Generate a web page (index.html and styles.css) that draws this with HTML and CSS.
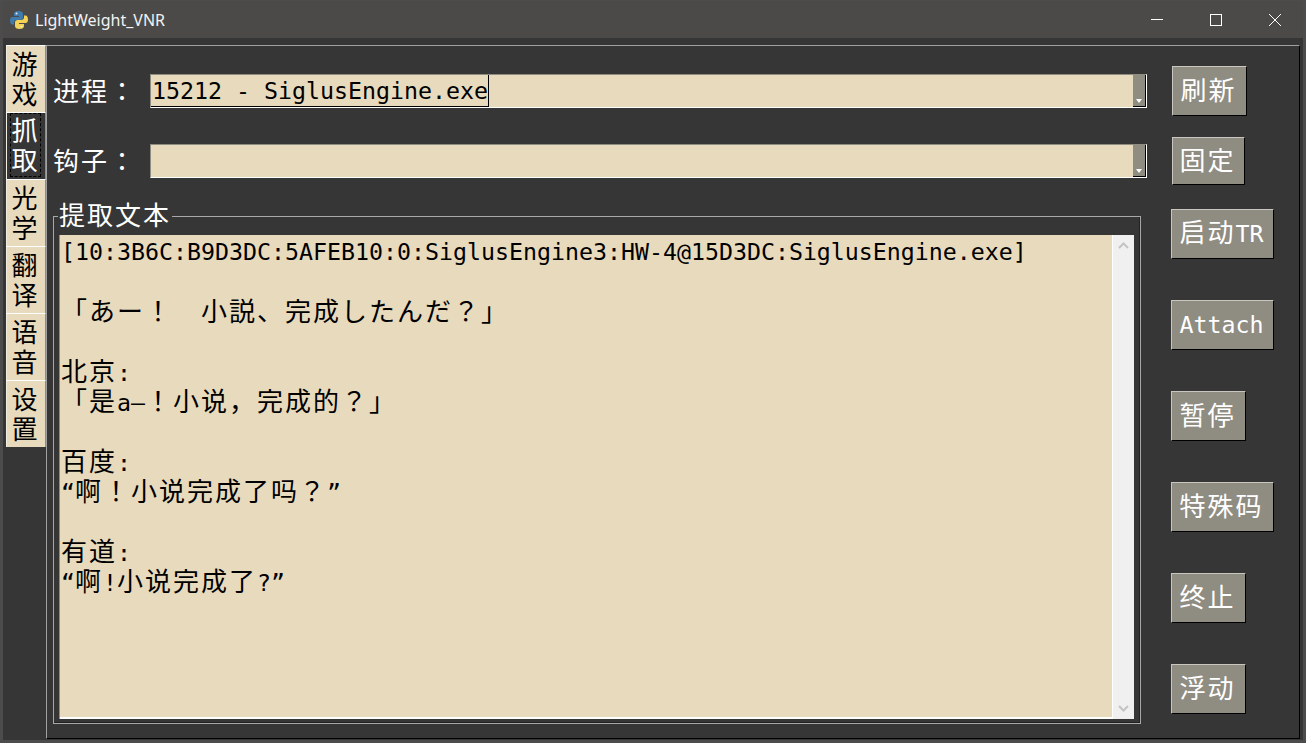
FILE: index.html
```html
<!DOCTYPE html>
<html lang="en">
  <head>
    <meta charset="UTF-8" />
    <title>LightWeight_VNR</title>
    <link rel="stylesheet" href="styles.css">
  </head>
  <body>
    <div class="window">
      <div class="titlebar">
        <svg class="app-icon" width="20" height="20" viewBox="0 0 20 20">
          <path fill="#3f7cad" d="M9.5 1C6.5 1 5 2.2 5 4v2h5v1H3.500C1.800 7 1 8.500 1 10.500S1.800 14.500 3.500 14.500H5V12.500C5 11 6.200 10 7.500 10h4C13 10 14 9 14 7.500V4C14 2.200 12.300 1 9.500 1z" />
          <path fill="#f2d355" d="M10.500 19C13.500 19 15 17.800 15 16v-2h-5v-1h6.500c1.700 0 2.500-1.500 2.500-3.500S18.200 5.500 16.500 5.500H15v2C15 9 13.800 10 12.500 10h-4C7 10 6 11 6 12.500V16c0 1.800 1.700 3 4.500 3z" />
          <circle cx="7.500" cy="3.500" r="1" fill="#e8eef2" />
          <circle cx="12.500" cy="16.500" r="1" fill="#e8eef2" />
        </svg>
        <span class="app-title">LightWeight_VNR</span>
        <div class="win-controls">
          <svg class="win-btn" width="46" height="38" viewBox="0 0 46 38"><path d="M17 18.500h12" stroke="#fff" fill="none" /></svg>
          <svg class="win-btn" width="46" height="38" viewBox="0 0 46 38"><rect x="17.500" y="13.500" width="11" height="11" stroke="#fff" fill="none" /></svg>
          <svg class="win-btn" width="46" height="38" viewBox="0 0 46 38"><path d="M17 13l12 12M29 13L17 25" stroke="#fff" fill="none" /></svg>
        </div>
      </div>
      <div class="content">
        <div class="tabs">
          <div class="tab">游<br />戏</div>
          <div class="tab tab-active"><span class="tab-focus">抓<br />取</span></div>
          <div class="tab">光<br />学</div>
          <div class="tab">翻<br />译</div>
          <div class="tab">语<br />音</div>
          <div class="tab">设<br />置</div>
        </div>
        <div class="pane">
          <div class="main">
            <div class="row row-process">
              <label class="row-label">进程：</label>
              <div class="combo">
                <span class="combo-value mono">15212 - SiglusEngine.exe</span>
                <span class="combo-arrow"><i></i></span>
              </div>
            </div>
            <div class="row row-hook">
              <label class="row-label">钩子：</label>
              <div class="combo">
                <span class="combo-arrow"><i></i></span>
              </div>
            </div>
            <div class="group">
              <div class="group-title">提取文本</div>
              <div class="textbox">
                <div class="text">
                  <p class="mono">[10:3B6C:B9D3DC:5AFEB10:0:SiglusEngine3:HW-4@15D3DC:SiglusEngine.exe]</p>
                  <p>&nbsp;</p>
                  <p>「あー！　小説、完成したんだ？」</p>
                  <p>&nbsp;</p>
                  <p>北京<span class="mono">:</span></p>
                  <p>「是<span class="mono">a—</span>！小说，完成的？」</p>
                  <p>&nbsp;</p>
                  <p>百度<span class="mono">:</span></p>
                  <p><span class="mono">“</span>啊！小说完成了吗？<span class="mono">”</span></p>
                  <p>&nbsp;</p>
                  <p>有道<span class="mono">:</span></p>
                  <p><span class="mono">“</span>啊<span class="mono">!</span>小说完成了<span class="mono">?”</span></p>
                </div>
                <div class="scrollbar">
                  <svg width="21" height="20" viewBox="0 0 21 20"><path d="M6 13l4.500-4.500L15 13" stroke="#c4c4c4" stroke-width="2" fill="none" /></svg>
                  <svg width="21" height="20" viewBox="0 0 21 20"><path d="M6 7l4.500 4.500L15 7" stroke="#c4c4c4" stroke-width="2" fill="none" /></svg>
                </div>
              </div>
            </div>
          </div>
          <div class="buttons">
            <button class="btn btn-refresh">刷新</button>
            <button class="btn btn-fix">固定</button>
            <button class="btn btn-wide">启动<span class="mono">TR</span></button>
            <button class="btn btn-wide"><span class="mono">Attach</span></button>
            <button class="btn">暂停</button>
            <button class="btn btn-wide">特殊码</button>
            <button class="btn">终止</button>
            <button class="btn">浮动</button>
          </div>
        </div>
      </div>
    </div>
  </body>
</html>
```
FILE: styles.css
```css
* {
  box-sizing: border-box;
}
body {
  margin: 0;
  font-family: "Noto Sans CJK JP", sans-serif;
}
.mono {
  font-family: "DejaVu Sans Mono", monospace;
  font-size: 23.25px;
  letter-spacing: 0;
}
.window {
  width: 1306px;
  height: 743px;
  display: flex;
  flex-direction: column;
  background: #363636;
  border: 1px solid #4c4c4c;
  border-width: 1px 3px 3px 3px;
  overflow: hidden;
}
.titlebar {
  height: 37px;
  flex: none;
  display: flex;
  align-items: center;
  background: #4b4a48;
  padding-left: 9px;
  margin: 0 -3px;
}
.app-icon {
  margin: 0 6px 0 0;
}
.app-title {
  font-family: "Noto Sans", sans-serif;
  font-size: 16px;
  color: #f2f2f2;
}
.win-controls {
  margin-left: auto;
  margin-right: 8px;
  display: flex;
  gap: 13px;
}

.content {
  flex: 1;
  display: flex;
  padding: 7px 3px 1px 3px;
  min-height: 0;
}
.tabs {
  width: 40px;
  flex: none;
  display: flex;
  flex-direction: column;
}
.tab {
  height: 67px;
  padding: 2px 3px 0 0;
  text-align: center;
  font-size: 26px;
  line-height: 30px;
  color: #000;
  background: #e8dabd;
  border-top: 1px solid #fff;
  border-left: 1px solid #f0ece0;
  border-right: 1px solid #8f8c82;
}
.tab-active {
  background: #363636;
  color: #fff;
  padding: 0 3px 0 3px;
}
.tab-focus {
  display: block;
  border: 1px dashed #000;
  height: 64px;
  margin-right: 1px;
  padding-right: 2px;
}
.pane {
  flex: 1;
  display: flex;
  border-top: 1px solid #a0a0a0;
  border-left: 1px solid #a0a0a0;
  border-right: 1px solid #000;
  border-bottom: 1px solid #000;
  min-width: 0;
}
.main {
  width: 1100px;
  flex: none;
  padding: 28px 0 14px 6px;
  display: flex;
  flex-direction: column;
}
.row {
  display: flex;
  align-items: center;
  height: 34px;
}
.row-hook {
  margin-top: 36px;
}
.row-label {
  width: 97px;
  flex: none;
  padding-bottom: 3px;
  color: #fff;
  font-size: 26px;
  letter-spacing: 2px;
}
.combo {
  flex: none;
  width: 997px;
  height: 34px;
  display: flex;
  align-items: center;
  background: #e8dabd;
  border: 1px solid;
  border-color: #8f8c82 #fff #fff #8f8c82;
}
.combo-value {
  color: #000;
  padding-left: 1px;
  border-right: 1px solid #000;
  border-bottom: 1px solid #000;
  line-height: 31px;
  height: 32px;
}
.combo-arrow {
  margin-left: auto;
  width: 13px;
  height: 32px;
  background: #8f8c82;
  border-right: 1px solid #000;
  border-bottom: 1px solid #000;
  position: relative;
}
.combo-arrow i {
  position: absolute;
  left: 3px;
  bottom: 3px;
  border: 3px solid transparent;
  border-top: 4px solid #fff;
  border-bottom: 0;
}
.group {
  position: relative;
  width: 1088px;
  height: 508px;
  flex: none;
  margin-top: 38px;
  padding: 18px 6px 4px 5px;
  border: 1px solid #a8a8a8;
  box-shadow: inset -1px -1px 0 #222;
}
.group-title {
  position: absolute;
  top: -17px;
  left: 4px;
  padding: 0 1px;
  background: #363636;
  font-size: 26px;
  letter-spacing: 2px;
  line-height: 28px;
  color: #fff;
}
.textbox {
  height: 100%;
  display: flex;
  border-left: 1px solid #8f8c82;
}
.text {
  flex: 1;
  padding: 2px 0 0 1px;
  min-width: 0;
  color: #000;
  background: #e8dabd;
  border-bottom: 2px solid #fff;
}
.text p {
  margin: 0;
  height: 30px;
  line-height: 26px;
  font-size: 26px;
  letter-spacing: 2px;
  white-space: pre;
}
.text p.mono {
  font-size: 23.25px;
  line-height: 30px;
  letter-spacing: 0;
}
.text p .mono {
  line-height: 1;
}
.scrollbar {
  width: 22px;
  flex: none;
  background: #f0f0f0;
  border-left: 1px solid #fff;
  display: flex;
  flex-direction: column;
  justify-content: space-between;
}
.buttons {
  width: 152px;
  flex: none;
  padding: 20px 0 0 24px;
  display: flex;
  flex-direction: column;
  align-items: flex-start;
}
.btn {
  height: 50px;
  width: 75px;
  flex: none;
  margin-bottom: 41px;
  padding: 0 2px 4px 0;
  background: #8f8c82;
  color: #fff;
  font-family: "Noto Sans CJK JP", sans-serif;
  font-size: 26px;
  letter-spacing: 2px;
  line-height: 30px;
  border: 1px solid;
  border-color: #c8c6be #000 #000 #c8c6be;
}
.btn-refresh {
  margin-bottom: 21px;
  margin-left: 1px;
}
.btn-fix {
  height: 48px;
  width: 73px;
  margin-bottom: 24px;
  margin-left: 1px;
}
.btn-wide {
  width: 103px;
}
```
